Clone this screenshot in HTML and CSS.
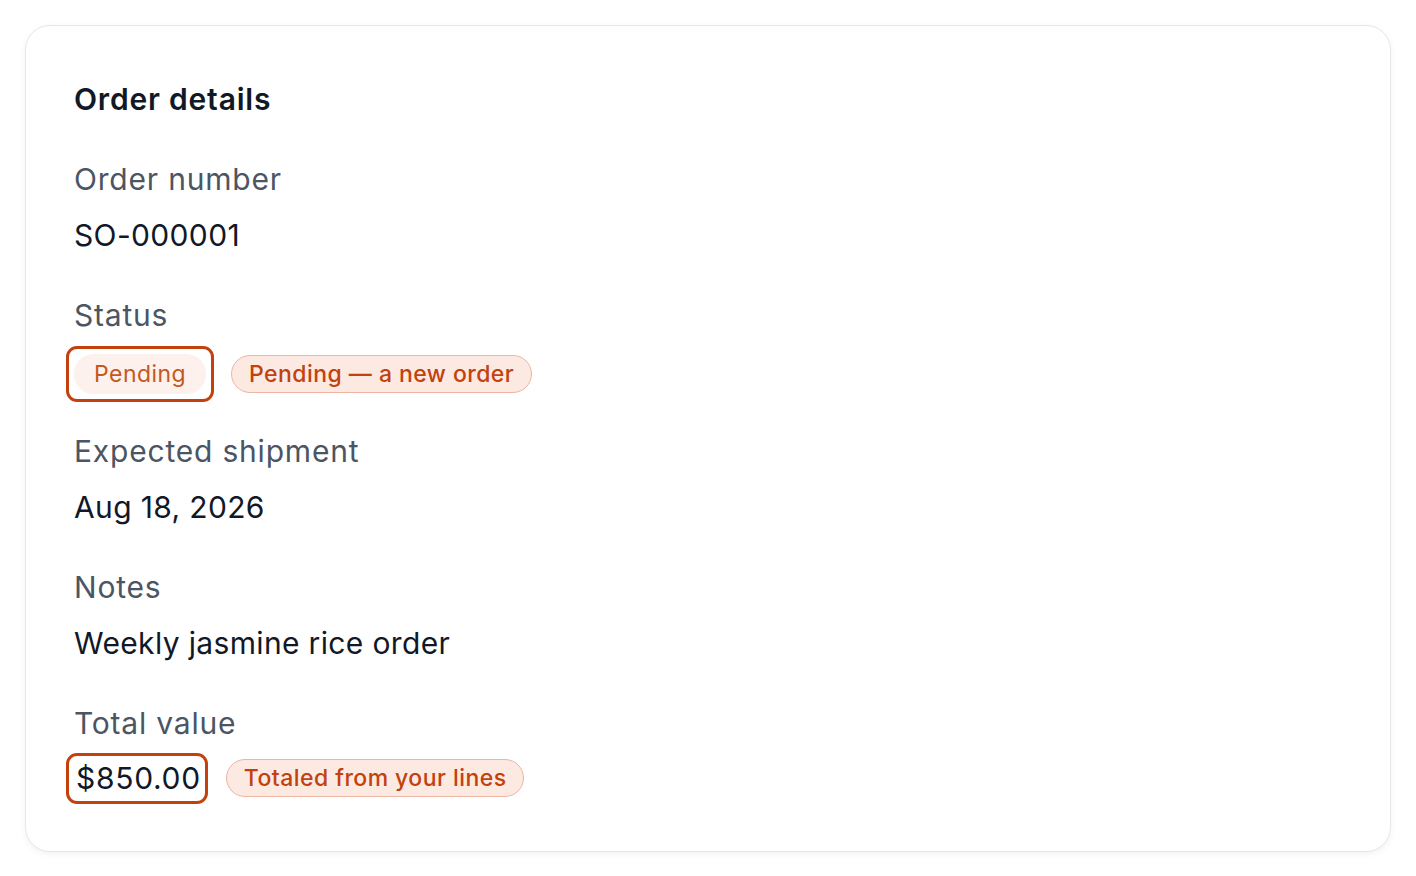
FILE: index.html
```html
<!DOCTYPE html>
<html lang="en">
<head>
<meta charset="utf-8">
<title>Order details</title>
<link rel="stylesheet" href="styles.css">
</head>
<body>
<section class="card">
  <h2 class="title">Order details</h2>
  <dl class="fields">
    <div class="field">
      <dt class="label">Order number</dt>
      <dd class="value">SO-000001</dd>
    </div>
    <div class="field">
      <dt class="label">Status</dt>
      <dd class="value row row-status">
        <span class="ring"><span class="pill pill-soft">Pending</span></span>
        <span class="pill pill-hint">Pending — a new order</span>
      </dd>
    </div>
    <div class="field">
      <dt class="label">Expected shipment</dt>
      <dd class="value">Aug 18, 2026</dd>
    </div>
    <div class="field">
      <dt class="label">Notes</dt>
      <dd class="value">Weekly jasmine rice order</dd>
    </div>
    <div class="field">
      <dt class="label">Total value</dt>
      <dd class="value row row-total">
        <span class="ring ring-text">$850.00</span>
        <span class="pill pill-hint">Totaled from your lines</span>
      </dd>
    </div>
  </dl>
</section>
</body>
</html>
```

FILE: styles.css
```css
* { box-sizing: border-box; }
html, body { margin: 0; padding: 0; background: #ffffff; }
body {
  font-family: Inter, "Noto Sans", "Liberation Sans", sans-serif;
  color: #111827;
  padding: 25px;
}
.card {
  width: 1366px;
  height: 827px;
  border: 1.5px solid #e5e7eb;
  border-radius: 25px;
  background: #fff;
  box-shadow: 0 2px 6px rgba(17, 24, 39, 0.06);
  padding: 51px 48px;
}
.title {
  margin: 0;
  font-size: 30px;
  line-height: 44px;
  font-weight: 600;
  letter-spacing: 0.8px;
  color: #111827;
}
.fields {
  margin: 36px 0 0;
  display: flex;
  flex-direction: column;
  gap: 36px;
}
.field {
  display: flex;
  flex-direction: column;
  gap: 12px;
}
.label {
  font-size: 30px;
  line-height: 44px;
  letter-spacing: 0.8px;
  color: #4b5563;
}
.value {
  margin: 0;
  font-size: 30px;
  line-height: 44px;
  letter-spacing: 0.35px;
  color: #111827;
}
.row {
  display: flex;
  align-items: center;
  height: 44px;
  margin-left: -8px;
}
.row-status { padding-top: 6px; gap: 17px; }
.row-total { padding-bottom: 2px; gap: 18px; }
.ring {
  display: inline-flex;
  align-items: center;
  flex: none;
  border: 3px solid #c2410c;
  border-radius: 11px;
  padding: 5px;
}
.ring-text {
  padding: 0 4px 0 7px;
  height: 51px;
  font-size: 30px;
  letter-spacing: 0.7px;
}
.pill {
  display: inline-flex;
  align-items: center;
  flex: none;
  height: 39px;
  border-radius: 20px;
  font-size: 23px;
  letter-spacing: 0.45px;
  padding: 0 17px;
}
.pill-soft {
  background: #fcf1ec;
  color: #c5581d;
  padding: 0 20px;
  height: 40px;
}
.pill-hint {
  background: #fce9e2;
  border: 1.5px solid #ecb6a2;
  color: #c2410c;
  font-weight: 500;
  height: 38px;
}
```
